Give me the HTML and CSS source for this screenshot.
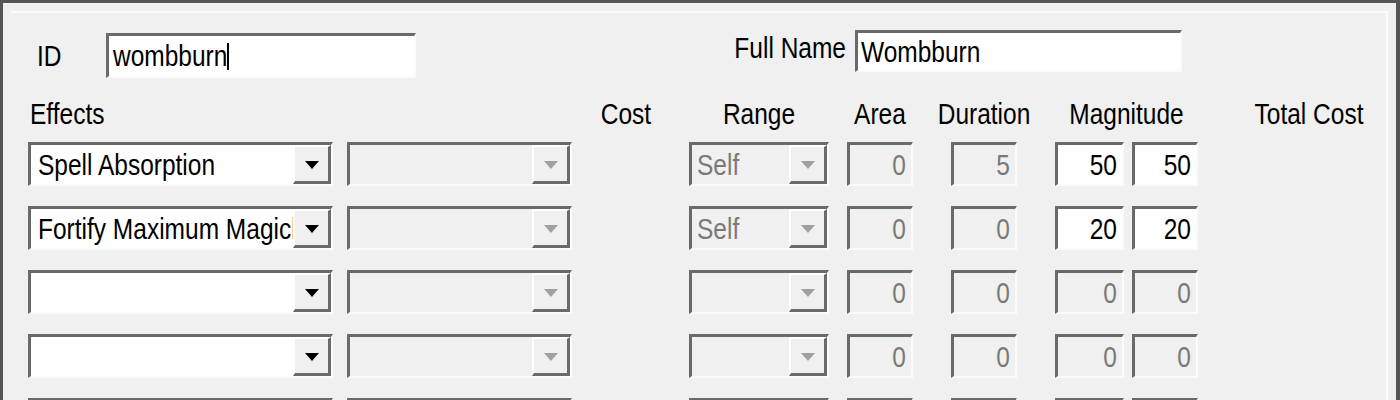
FILE: index.html
```html
<!DOCTYPE html>
<html lang="en">
<head>
    <meta charset="UTF-8">
    <title>Spell - wombburn</title>
    <link rel="stylesheet" href="styles.css">
</head>
<body>
    <div class="dialog">
        <div class="frame">
            <div class="top-row">
                <div class="field id-field">
                    <span class="label"><span class="txt">ID</span></span>
                    <div class="edit id-edit"><span class="txt">wombburn</span><span class="caret"></span></div>
                </div>
                <div class="field name-field">
                    <span class="label"><span class="txt">Full Name</span></span>
                    <div class="edit name-edit"><span class="txt">Wombburn</span></div>
                </div>
            </div>

            <div class="row head-row">
                <div class="c-effect head-left"><span class="txt">Effects</span></div>
                <div class="c-sub"></div>
                <div class="c-cost"><span class="txt">Cost</span></div>
                <div class="c-range"><span class="txt">Range</span></div>
                <div class="c-area"><span class="txt">Area</span></div>
                <div class="c-dur"><span class="txt">Duration</span></div>
                <div class="c-mag"><span class="txt">Magnitude</span></div>
                <div class="c-total"><span class="txt">Total Cost</span></div>
            </div>

            <!-- строки эффектов -->
            <div class="row effect-row">
                <div class="c-effect combo"><span class="combo-text"><span class="txt">Spell Absorption</span></span><span class="combo-btn"><i class="arrow"></i></span></div>
                <div class="c-sub combo disabled"><span class="combo-text"></span><span class="combo-btn"><i class="arrow"></i></span></div>
                <div class="c-cost"></div>
                <div class="c-range combo disabled"><span class="combo-text"><span class="txt">Self</span></span><span class="combo-btn"><i class="arrow"></i></span></div>
                <div class="c-area num disabled"><span class="txt">0</span></div>
                <div class="c-dur num disabled"><span class="txt">5</span></div>
                <div class="c-mag"><div class="num mag-min"><span class="txt">50</span></div><div class="num mag-max"><span class="txt">50</span></div></div>
            </div>
            <div class="row effect-row">
                <div class="c-effect combo"><span class="combo-text"><span class="txt">Fortify Maximum Magicka</span></span><span class="combo-btn"><i class="arrow"></i></span></div>
                <div class="c-sub combo disabled"><span class="combo-text"></span><span class="combo-btn"><i class="arrow"></i></span></div>
                <div class="c-cost"></div>
                <div class="c-range combo disabled"><span class="combo-text"><span class="txt">Self</span></span><span class="combo-btn"><i class="arrow"></i></span></div>
                <div class="c-area num disabled"><span class="txt">0</span></div>
                <div class="c-dur num disabled"><span class="txt">0</span></div>
                <div class="c-mag"><div class="num mag-min"><span class="txt">20</span></div><div class="num mag-max"><span class="txt">20</span></div></div>
            </div>
            <div class="row effect-row">
                <div class="c-effect combo"><span class="combo-text"></span><span class="combo-btn"><i class="arrow"></i></span></div>
                <div class="c-sub combo disabled"><span class="combo-text"></span><span class="combo-btn"><i class="arrow"></i></span></div>
                <div class="c-cost"></div>
                <div class="c-range combo disabled"><span class="combo-text"></span><span class="combo-btn"><i class="arrow"></i></span></div>
                <div class="c-area num disabled"><span class="txt">0</span></div>
                <div class="c-dur num disabled"><span class="txt">0</span></div>
                <div class="c-mag"><div class="num mag-min disabled"><span class="txt">0</span></div><div class="num mag-max disabled"><span class="txt">0</span></div></div>
            </div>
            <div class="row effect-row">
                <div class="c-effect combo"><span class="combo-text"></span><span class="combo-btn"><i class="arrow"></i></span></div>
                <div class="c-sub combo disabled"><span class="combo-text"></span><span class="combo-btn"><i class="arrow"></i></span></div>
                <div class="c-cost"></div>
                <div class="c-range combo disabled"><span class="combo-text"></span><span class="combo-btn"><i class="arrow"></i></span></div>
                <div class="c-area num disabled"><span class="txt">0</span></div>
                <div class="c-dur num disabled"><span class="txt">0</span></div>
                <div class="c-mag"><div class="num mag-min disabled"><span class="txt">0</span></div><div class="num mag-max disabled"><span class="txt">0</span></div></div>
            </div>
            <!-- пятая строка видна только верхним краем -->
            <div class="row effect-row">
                <div class="c-effect combo"><span class="combo-text"></span><span class="combo-btn"><i class="arrow"></i></span></div>
                <div class="c-sub combo disabled"><span class="combo-text"></span><span class="combo-btn"><i class="arrow"></i></span></div>
                <div class="c-cost"></div>
                <div class="c-range combo disabled"><span class="combo-text"></span><span class="combo-btn"><i class="arrow"></i></span></div>
                <div class="c-area num disabled"></div>
                <div class="c-dur num disabled"></div>
                <div class="c-mag"><div class="num mag-min disabled"></div><div class="num mag-max disabled"></div></div>
            </div>
        </div>
    </div>
</body>
</html>
```

FILE: styles.css
```css
:root {
    --face: #f0f0f0;
    --shadow: #6a6a6a;
    --light: #fbfbfb;
    --gray-text: #7a7a7a;
}
html, body {
    margin: 0;
    height: 100%;
}
body {
    background-color: var(--face);
    color: #000;
    font-family: "Liberation Sans", Arial, sans-serif;
    font-size: 24.5px;
    overflow: hidden;
}
/* шрифт диалога вытянут по вертикали */
.txt {
    display: inline-block;
    transform: scaleY(1.2);
}
.dialog {
    box-sizing: border-box;
    width: 1400px;
    height: 400px;
    overflow: hidden;
    border-top: 3px solid #555;
    border-left: 3px solid #555;
    border-right: 4px solid #555;
    padding: 8px 8px 0 8px;
}
.frame {
    border-top: 2px solid var(--light);
    border-right: 2px solid var(--light);
    padding: 17px 0 0 17px;
}

/* верхняя строка */
.top-row {
    display: flex;
    align-items: flex-start;
    width: 1154px;
}
.field {
    display: flex;
    align-items: center;
}
.id-field {
    margin-top: 3px;
}
.id-field .label {
    width: 78px;
    padding-left: 9px;
    box-sizing: border-box;
}
.name-field {
    margin-left: auto;
}
.name-field .label {
    margin-right: 9px;
    margin-top: -6px;
}
.edit {
    box-sizing: border-box;
    background: #fff;
    border-top: 3px solid var(--shadow);
    border-left: 3px solid var(--shadow);
    border-right: 2px solid var(--light);
    border-bottom: 2px solid var(--light);
    display: flex;
    align-items: center;
    padding-left: 4px;
    white-space: nowrap;
}
.id-edit {
    width: 310px;
    height: 45px;
}
.name-edit {
    width: 327px;
    height: 42px;
    padding-left: 3px;
}
.caret {
    display: inline-block;
    width: 2px;
    height: 27px;
    background: #000;
    margin-left: 0;
}

/* таблица эффектов */
.row {
    display: flex;
    align-items: stretch;
}
.head-row {
    margin-top: 22px;
    height: 28px;
    line-height: 28px;
    margin-bottom: 14px;
}
.head-row > div {
    display: flex;
    justify-content: center;
    white-space: nowrap;
}
.head-row > .head-left {
    justify-content: flex-start;
    padding-left: 2px;
    box-sizing: border-box;
}
.effect-row {
    height: 44px;
    margin-bottom: 20px;
    flex: none;
}
.c-effect { width: 305px; flex: none; }
.c-sub    { width: 225px; margin-left: 14px; flex: none; }
.c-cost   { width: 92px;  margin-left: 8px; flex: none; }
.c-range  { width: 140px; margin-left: 17px; flex: none; }
.c-area   { width: 66px;  margin-left: 18px; flex: none; }
.c-dur    { width: 66px;  margin-left: 38px; flex: none; }
.c-mag    { width: 143px; margin-left: 38px; flex: none; }
.c-total  { width: 132px; margin-left: 45px; flex: none; }
.effect-row .c-mag {
    display: flex;
    justify-content: space-between;
}

.combo {
    box-sizing: border-box;
    display: flex;
    background: #fff;
    border-top: 3px solid var(--shadow);
    border-left: 3px solid var(--shadow);
    border-right: 2px solid var(--light);
    border-bottom: 2px solid var(--light);
}
.combo-text {
    flex: 1;
    min-width: 0;
    overflow: hidden;
    white-space: nowrap;
    padding-left: 7px;
    line-height: 39px;
}
.combo-btn {
    box-sizing: border-box;
    width: 38px;
    flex: none;
    background: var(--face);
    border-top: 2px solid #fff;
    border-left: 2px solid #fff;
    border-right: 3px solid var(--shadow);
    border-bottom: 3px solid var(--shadow);
    display: flex;
    align-items: center;
    justify-content: center;
}
.arrow {
    width: 0;
    height: 0;
    border-left: 7px solid transparent;
    border-right: 7px solid transparent;
    border-top: 8px solid #000;
    margin-top: 2px;
}
.combo.disabled {
    background: var(--face);
    color: var(--gray-text);
}
.combo.disabled .combo-text {
    padding-left: 5px;
}
.combo.disabled .arrow {
    border-top-color: #a0a0a0;
}

.num {
    box-sizing: border-box;
    background: #fff;
    border-top: 3px solid var(--shadow);
    border-left: 3px solid var(--shadow);
    border-right: 2px solid var(--light);
    border-bottom: 2px solid var(--light);
    text-align: right;
    padding-right: 5px;
    line-height: 39px;
}
.num.disabled {
    background: var(--face);
    color: var(--gray-text);
}
.mag-min { width: 69px; }
.mag-max { width: 66px; }
```
